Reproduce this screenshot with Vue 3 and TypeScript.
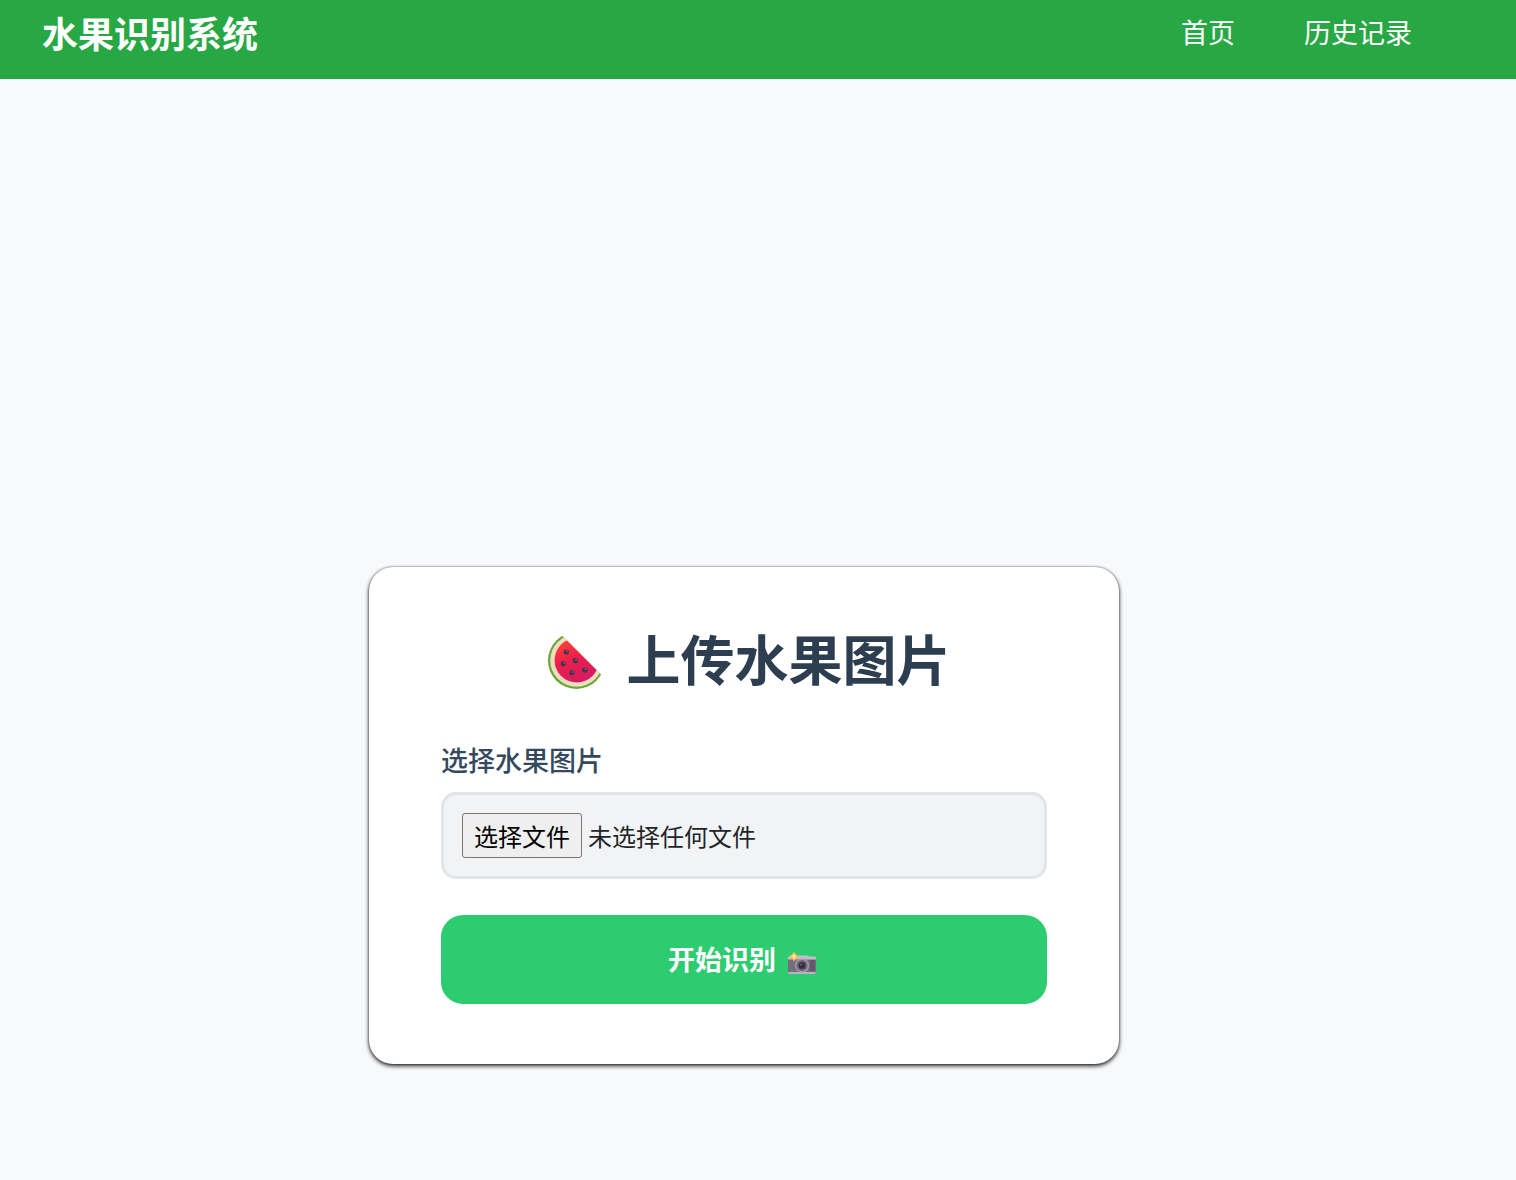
<script setup lang="ts">
import { computed, ref } from 'vue'

const fileInput = ref<HTMLInputElement | null>(null)
const fileName = ref<string>('')
const fileLabel = computed<string>(() => fileName.value || '未选择任何文件')

function openPicker(): void {
  fileInput.value?.click()
}

function onFileChange(event: Event): void {
  const input = event.target as HTMLInputElement
  fileName.value = input.files?.[0]?.name ?? ''
}
</script>

<template>
  <div class="page">
    <header class="navbar">
      <a class="brand" href="#">水果识别系统</a>
      <nav class="links">
        <a href="#">首页</a>
        <a href="#history">历史记录</a>
      </nav>
    </header>

    <main class="content">
      <section class="card">
        <h1 class="title">
          <svg class="melon" viewBox="0 -1 74 56" aria-hidden="true">
            <defs>
              <clipPath id="slice">
                <path d="M-1 -23.5 L75 52.5 V80 H-1 Z" />
              </clipPath>
              <linearGradient id="flesh" x1="0.2" y1="0" x2="0.6" y2="0.9">
                <stop offset="0" stop-color="#ff4534" />
                <stop offset="0.5" stop-color="#ee1f4b" />
                <stop offset="1" stop-color="#d81b60" />
              </linearGradient>
            </defs>
            <g clip-path="url(#slice)">
              <circle cx="38.4" cy="26.6" r="28.4" fill="#6ba539" />
              <circle cx="38.6" cy="26.4" r="26.4" fill="#f0dcc0" />
              <circle cx="38.8" cy="26.2" r="22.2" fill="url(#flesh)" />
            </g>
            <g fill="#46344a">
              <circle cx="28.3" cy="18" r="2.6" />
              <circle cx="37.3" cy="26.7" r="2.6" />
              <circle cx="25.3" cy="29.7" r="2.6" />
              <circle cx="46.7" cy="36" r="2.6" />
              <circle cx="34" cy="38.7" r="2.6" />
            </g>
            <g fill="#746a7c">
              <circle cx="29" cy="17.2" r="0.9" />
              <circle cx="38" cy="25.9" r="0.9" />
              <circle cx="26" cy="28.9" r="0.9" />
              <circle cx="47.4" cy="35.2" r="0.9" />
              <circle cx="34.7" cy="37.9" r="0.9" />
            </g>
          </svg>
          <span>上传水果图片</span>
        </h1>

        <form @submit.prevent>
          <label class="field-label" for="fruit-image">选择水果图片</label>
          <div class="file-box">
            <input
              id="fruit-image"
              ref="fileInput"
              class="file-input"
              type="file"
              accept="image/*"
              tabindex="-1"
              @change="onFileChange"
            />
            <button class="file-button" type="button" @click="openPicker">选择文件</button>
            <span class="file-name">{{ fileLabel }}</span>
          </div>

          <button class="submit" type="submit">
            <span>开始识别</span>
            <svg class="camera" viewBox="0 -1 37 30" aria-hidden="true">
              <rect x="5" y="12" width="28" height="17" rx="1" fill="#756e7e" />
              <path d="M6 11.500 H12 L14 10.500 H24 L26 11.500 H32 Q33 11.500 33 12.500 V14.500 H5 V12.500 Q5 11.500 6 11.500 Z" fill="#c3bdca" />
              <rect x="5" y="27" width="28" height="2" rx="1" fill="#b9b3c2" />
              <rect x="27" y="15" width="5" height="11" fill="#625a68" />
              <circle cx="19" cy="20.500" r="7" fill="#a39cac" />
              <circle cx="19" cy="20.500" r="5.500" fill="#6c6477" />
              <circle cx="19" cy="20.500" r="3.500" fill="#393143" />
              <circle cx="18" cy="19.500" r="1" fill="#6f6a7e" />
              <path d="M11 6.500 L13 9.500 L16 11.500 L13 13.500 L11 16.500 L9 13.500 L6 11.500 L9 9.500 Z" fill="#f5bc45" />
              <path d="M11 8.500 L12.500 10.500 L14 11.500 L12.500 12.500 L11 14.500 L9.500 12.500 L8 11.500 L9.500 10.500 Z" fill="#ffe394" />
            </svg>
          </button>
        </form>
      </section>
    </main>
  </div>
</template>

<style>
body {
  margin: 0;
  background: #f8f9fb;
}
</style>

<style scoped>
.page {
  display: flex;
  flex-direction: column;
  min-height: 100vh;
  font-family: 'Noto Sans CJK SC', 'Noto Sans', sans-serif;
  color: #212529;
}

.navbar {
  display: flex;
  align-items: flex-start;
  justify-content: space-between;
  padding: 8px 104px 23px 42px;
  background: #28a745;
}

.brand,
.links a {
  color: #fff;
  text-decoration: none;
}

.brand {
  font-size: 36px;
  font-weight: 700;
  line-height: 48px;
}

.links {
  display: flex;
  gap: 69px;
  font-size: 27px;
  line-height: 48px;
}

.content {
  display: flex;
  flex: 1;
  align-items: flex-end;
  justify-content: center;
  padding: 48px 28px 116px 0;
}

.card {
  box-sizing: border-box;
  width: 100%;
  max-width: 750px;
  padding: 60px 72px;
  border-radius: 24px;
  background: #fff;
  box-shadow:
    0 2px 4px rgba(0, 0, 0, 0.85),
    0 0 2px rgba(0, 0, 0, 0.5);
}

.title {
  display: flex;
  align-items: flex-end;
  justify-content: center;
  gap: 15px;
  margin: 0 0 51px;
  font-size: 54px;
  font-weight: 700;
  line-height: 62px;
  color: #2c3e50;
}

.melon {
  width: 74px;
  height: 56px;
}

.field-label {
  display: block;
  margin-bottom: 12px;
  font-size: 27px;
  font-weight: 500;
  line-height: 40px;
  color: #34495e;
}

.file-box {
  display: flex;
  align-items: center;
  gap: 6px;
  margin-bottom: 36px;
  padding: 18px;
  border: 3px solid #dfe6e9;
  border-radius: 15px;
  background: #f1f3f5;
  font-size: 24px;
}

.file-input {
  position: absolute;
  width: 1px;
  height: 1px;
  overflow: hidden;
  opacity: 0;
}

.file-button {
  box-sizing: border-box;
  height: 45px;
  padding: 0 11px;
  border: 1px solid #767676;
  border-radius: 3px;
  background: #efefef;
  font: inherit;
  line-height: 43px;
  color: #000;
}

.file-name {
  line-height: 45px;
}

.submit {
  display: flex;
  align-items: center;
  justify-content: center;
  gap: 7px;
  width: 100%;
  padding: 24px 24px 26px;
  border: 0;
  border-radius: 22px;
  background: #2ecc71;
  font-family: inherit;
  font-size: 27px;
  font-weight: 700;
  line-height: 39px;
  color: #fff;
  cursor: pointer;
}

.camera {
  width: 37px;
  height: 30px;
}
</style>
